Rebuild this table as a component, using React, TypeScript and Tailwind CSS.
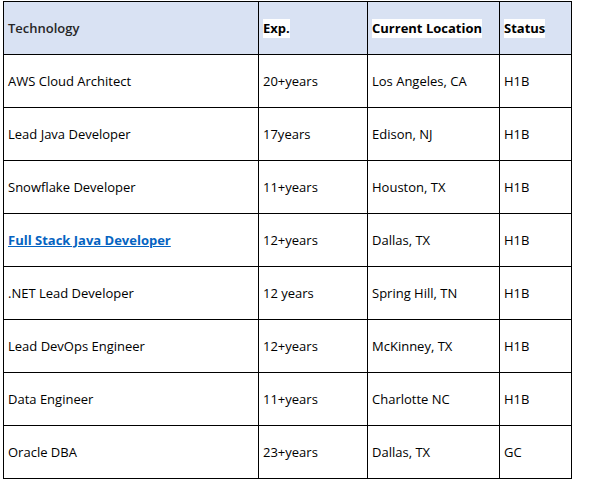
const rows: { tech: string; exp: string; loc: string; status: string; link?: boolean }[] = [
  { tech: "AWS Cloud Architect", exp: "20+years", loc: "Los Angeles, CA", status: "H1B" },
  { tech: "Lead Java Developer", exp: "17years", loc: "Edison, NJ", status: "H1B" },
  { tech: "Snowflake Developer", exp: "11+years", loc: "Houston, TX", status: "H1B" },
  { tech: "Full Stack Java Developer", exp: "12+years", loc: "Dallas, TX", status: "H1B", link: true },
  { tech: ".NET Lead Developer", exp: "12 years", loc: "Spring Hill, TN", status: "H1B" },
  { tech: "Lead DevOps Engineer", exp: "12+years", loc: "McKinney, TX", status: "H1B" },
  { tech: "Data Engineer", exp: "11+years", loc: "Charlotte NC", status: "H1B" },
  { tech: "Oracle DBA", exp: "23+years", loc: "Dallas, TX", status: "GC" },
];

const cell = "border border-black px-[4px] pt-[2px] align-middle";

export default function App() {
  return (
    <div
      className="w-[595px] h-[479px] bg-white pt-[1px] pl-[3px] text-[13px] text-black"
      style={{ fontFamily: '"Open Sans", "Liberation Sans", sans-serif' }}
    >
      <table className="table-fixed border-collapse w-[568px]">
        <colgroup>
          <col className="w-[255px]" />
          <col className="w-[109px]" />
          <col className="w-[132px]" />
          <col className="w-[72px]" />
        </colgroup>
        <thead>
          <tr className="h-[53px] bg-[#d9e2f3]">
            <th className={`${cell} text-left font-semibold text-[#262626]`}>Technology</th>
            <th className={`${cell} text-left font-bold`}>
              <span className="bg-white leading-[19px] inline-block">Exp.</span>
            </th>
            <th className={`${cell} text-left font-bold`}>
              <span className="bg-white leading-[19px] inline-block">Current Location</span>
            </th>
            <th className={`${cell} text-left font-bold`}>
              <span className="bg-white leading-[19px] inline-block">Status</span>
            </th>
          </tr>
        </thead>
        <tbody>
          {rows.map((r) => (
            <tr key={r.tech} className="h-[53px]">
              <td className={cell}>
                {r.link ? (
                  <a className="font-bold text-[#0563c1] underline">{r.tech}</a>
                ) : (
                  r.tech
                )}
              </td>
              <td className={cell}>{r.exp}</td>
              <td className={cell}>{r.loc}</td>
              <td className={cell}>{r.status}</td>
            </tr>
          ))}
        </tbody>
      </table>
    </div>
  );
}
